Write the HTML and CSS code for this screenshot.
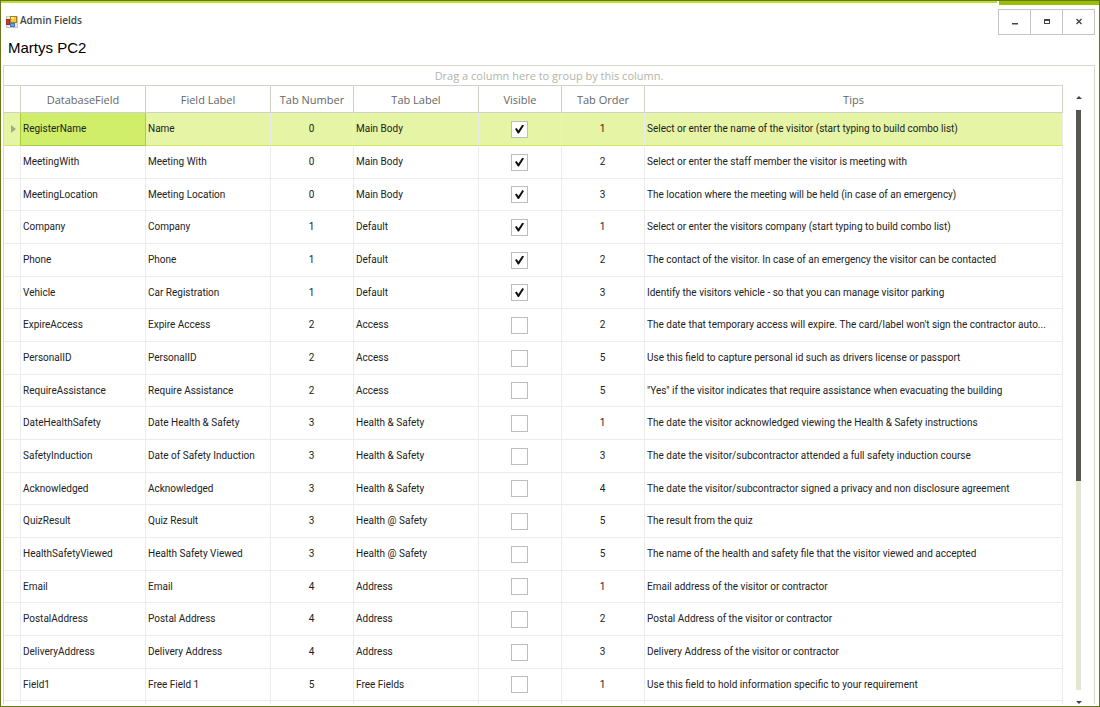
FILE: index.html
```html
<!DOCTYPE html>
<html lang="en">
<head>
    <meta charset="UTF-8">
    <title>Admin Fields</title>
    <link rel="stylesheet" href="styles.css">
</head>
<body>
    <div class="window">
        <div class="title-bar">
            <div class="title">
                <svg class="app-icon" width="12" height="12" viewBox="0 0 12 12">
                    <rect x="0.5" y="0.5" width="11" height="11" fill="#eceae6" stroke="#c9c6c2"/>
                    <rect x="4.5" y="0.5" width="6" height="6" fill="#f5c73c" stroke="#a8801c"/>
                    <rect x="5" y="1" width="3" height="2" fill="#fbe9a4"/>
                    <rect x="0.5" y="3.5" width="3" height="5" fill="#c8402e" stroke="#963024"/>
                    <rect x="4.5" y="7.5" width="4" height="3" fill="#6ba5f2" stroke="#3f74cf"/>
                </svg>
                <span>Admin Fields</span>
            </div>
            <div class="window-buttons">
                <button type="button" aria-label="Minimize">
                    <svg width="8" height="8" viewBox="0 0 8 8"><path d="M1 5h6v1.500H1z" fill="#444"/></svg>
                </button>
                <button type="button" aria-label="Maximize">
                    <svg width="8" height="8" viewBox="0 0 8 8"><path d="M1 1h6v5H1zM2 3v2h4V3z" fill="#444" fill-rule="evenodd"/></svg>
                </button>
                <button type="button" aria-label="Close">
                    <svg width="8" height="8" viewBox="0 0 8 8"><path d="M1.500 1l5 5M6.500 1l-5 5" stroke="#444" stroke-width="1.400"/></svg>
                </button>
            </div>
        </div>

        <h1>Martys PC2</h1>

        <div class="grid-panel">
            <div class="group-panel">Drag a column here to group by this column.</div>
            <div class="grid-body">
                <div class="grid-view">
                    <table class="fields-table">
                        <colgroup>
                            <col class="col-marker">
                            <col class="col-text">
                            <col class="col-text">
                            <col class="col-number">
                            <col class="col-text">
                            <col class="col-number">
                            <col class="col-number">
                            <col>
                        </colgroup>
                        <thead>
                            <tr>
                                <th></th>
                                <th>DatabaseField</th>
                                <th>Field Label</th>
                                <th>Tab Number</th>
                                <th>Tab Label</th>
                                <th>Visible</th>
                                <th>Tab Order</th>
                                <th>Tips</th>
                            </tr>
                        </thead>
                        <tbody>
                            <tr class="selected">
                                <td class="marker"><svg width="5" height="8" viewBox="0 0 5 8"><path d="M0 0l5 4-5 4z" fill="#a3ab83"/></svg></td>
                                <td class="current">RegisterName</td>
                                <td>Name</td>
                                <td class="center">0</td>
                                <td>Main Body</td>
                                <td class="center"><input type="checkbox" aria-label="Name visible" checked></td>
                                <td class="center">1</td>
                                <td>Select or enter the name of the visitor (start typing to build combo list)</td>
                            </tr>
                            <tr>
                                <td></td>
                                <td>MeetingWith</td>
                                <td>Meeting With</td>
                                <td class="center">0</td>
                                <td>Main Body</td>
                                <td class="center"><input type="checkbox" aria-label="Meeting With visible" checked></td>
                                <td class="center">2</td>
                                <td>Select or enter the staff member the visitor is meeting with</td>
                            </tr>
                            <tr>
                                <td></td>
                                <td>MeetingLocation</td>
                                <td>Meeting Location</td>
                                <td class="center">0</td>
                                <td>Main Body</td>
                                <td class="center"><input type="checkbox" aria-label="Meeting Location visible" checked></td>
                                <td class="center">3</td>
                                <td>The location where the meeting will be held (in case of an emergency)</td>
                            </tr>
                            <tr>
                                <td></td>
                                <td>Company</td>
                                <td>Company</td>
                                <td class="center">1</td>
                                <td>Default</td>
                                <td class="center"><input type="checkbox" aria-label="Company visible" checked></td>
                                <td class="center">1</td>
                                <td>Select or enter the visitors company (start typing to build combo list)</td>
                            </tr>
                            <tr>
                                <td></td>
                                <td>Phone</td>
                                <td>Phone</td>
                                <td class="center">1</td>
                                <td>Default</td>
                                <td class="center"><input type="checkbox" aria-label="Phone visible" checked></td>
                                <td class="center">2</td>
                                <td>The contact of the visitor. In case of an emergency the visitor can be contacted</td>
                            </tr>
                            <tr>
                                <td></td>
                                <td>Vehicle</td>
                                <td>Car Registration</td>
                                <td class="center">1</td>
                                <td>Default</td>
                                <td class="center"><input type="checkbox" aria-label="Car Registration visible" checked></td>
                                <td class="center">3</td>
                                <td>Identify the visitors vehicle - so that you can manage visitor parking</td>
                            </tr>
                            <tr>
                                <td></td>
                                <td>ExpireAccess</td>
                                <td>Expire Access</td>
                                <td class="center">2</td>
                                <td>Access</td>
                                <td class="center"><input type="checkbox" aria-label="Expire Access visible"></td>
                                <td class="center">2</td>
                                <td>The date that temporary access will expire. The card/label won't sign the contractor auto...</td>
                            </tr>
                            <tr>
                                <td></td>
                                <td>PersonalID</td>
                                <td>PersonalID</td>
                                <td class="center">2</td>
                                <td>Access</td>
                                <td class="center"><input type="checkbox" aria-label="PersonalID visible"></td>
                                <td class="center">5</td>
                                <td>Use this field to capture personal id such as drivers license or passport</td>
                            </tr>
                            <tr>
                                <td></td>
                                <td>RequireAssistance</td>
                                <td>Require Assistance</td>
                                <td class="center">2</td>
                                <td>Access</td>
                                <td class="center"><input type="checkbox" aria-label="Require Assistance visible"></td>
                                <td class="center">5</td>
                                <td>"Yes" if the visitor indicates that require assistance when evacuating the building</td>
                            </tr>
                            <tr>
                                <td></td>
                                <td>DateHealthSafety</td>
                                <td>Date Health &amp; Safety</td>
                                <td class="center">3</td>
                                <td>Health &amp; Safety</td>
                                <td class="center"><input type="checkbox" aria-label="Date Health &amp; Safety visible"></td>
                                <td class="center">1</td>
                                <td>The date the visitor acknowledged viewing the Health &amp; Safety instructions</td>
                            </tr>
                            <tr>
                                <td></td>
                                <td>SafetyInduction</td>
                                <td>Date of Safety Induction</td>
                                <td class="center">3</td>
                                <td>Health &amp; Safety</td>
                                <td class="center"><input type="checkbox" aria-label="Date of Safety Induction visible"></td>
                                <td class="center">3</td>
                                <td>The date the visitor/subcontractor attended a full safety induction course</td>
                            </tr>
                            <tr>
                                <td></td>
                                <td>Acknowledged</td>
                                <td>Acknowledged</td>
                                <td class="center">3</td>
                                <td>Health &amp; Safety</td>
                                <td class="center"><input type="checkbox" aria-label="Acknowledged visible"></td>
                                <td class="center">4</td>
                                <td>The date the visitor/subcontractor signed a privacy and non disclosure agreement</td>
                            </tr>
                            <tr>
                                <td></td>
                                <td>QuizResult</td>
                                <td>Quiz Result</td>
                                <td class="center">3</td>
                                <td>Health @ Safety</td>
                                <td class="center"><input type="checkbox" aria-label="Quiz Result visible"></td>
                                <td class="center">5</td>
                                <td>The result from the quiz</td>
                            </tr>
                            <tr>
                                <td></td>
                                <td>HealthSafetyViewed</td>
                                <td>Health Safety Viewed</td>
                                <td class="center">3</td>
                                <td>Health @ Safety</td>
                                <td class="center"><input type="checkbox" aria-label="Health Safety Viewed visible"></td>
                                <td class="center">5</td>
                                <td>The name of the health and safety file that the visitor viewed and accepted</td>
                            </tr>
                            <tr>
                                <td></td>
                                <td>Email</td>
                                <td>Email</td>
                                <td class="center">4</td>
                                <td>Address</td>
                                <td class="center"><input type="checkbox" aria-label="Email visible"></td>
                                <td class="center">1</td>
                                <td>Email address of the visitor or contractor</td>
                            </tr>
                            <tr>
                                <td></td>
                                <td>PostalAddress</td>
                                <td>Postal Address</td>
                                <td class="center">4</td>
                                <td>Address</td>
                                <td class="center"><input type="checkbox" aria-label="Postal Address visible"></td>
                                <td class="center">2</td>
                                <td>Postal Address of the visitor or contractor</td>
                            </tr>
                            <tr>
                                <td></td>
                                <td>DeliveryAddress</td>
                                <td>Delivery Address</td>
                                <td class="center">4</td>
                                <td>Address</td>
                                <td class="center"><input type="checkbox" aria-label="Delivery Address visible"></td>
                                <td class="center">3</td>
                                <td>Delivery Address of the visitor or contractor</td>
                            </tr>
                            <tr>
                                <td></td>
                                <td>Field1</td>
                                <td>Free Field 1</td>
                                <td class="center">5</td>
                                <td>Free Fields</td>
                                <td class="center"><input type="checkbox" aria-label="Free Field 1 visible"></td>
                                <td class="center">1</td>
                                <td>Use this field to hold information specific to your requirement</td>
                            </tr>
                            <tr>
                                <td></td>
                                <td></td>
                                <td></td>
                                <td></td>
                                <td></td>
                                <td></td>
                                <td></td>
                                <td></td>
                            </tr>
                        </tbody>
                    </table>
                </div>
                <div class="scrollbar">
                    <button type="button" aria-label="Scroll up">
                        <svg width="6" height="3" viewBox="0 0 6 3"><path d="M0 3l3-3 3 3z" fill="#444"/></svg>
                    </button>
                    <div class="track"><div class="thumb"></div></div>
                    <button type="button" aria-label="Scroll down">
                        <svg width="6" height="3" viewBox="0 0 6 3"><path d="M0 0h6L3 3z" fill="#444"/></svg>
                    </button>
                </div>
            </div>
        </div>
    </div>
</body>
</html>
```

FILE: styles.css
```css
* {
    box-sizing: border-box;
}

body {
    margin: 0;
    font-family: "Open Sans", "Noto Sans", sans-serif;
    font-size: 11px;
    color: #222;
    background: #fff;
}

button {
    padding: 0;
    border: none;
    background: none;
    display: flex;
    align-items: center;
    justify-content: center;
}

.window {
    height: 100vh;
    display: flex;
    flex-direction: column;
    overflow: hidden;
    border: 1px solid #66781a;
    padding: 0 4px 2px 2px;
}

/* Title bar */
.title-bar {
    display: flex;
    justify-content: space-between;
    margin: 0 -4px 0 -2px;
    padding-left: 5px;
    height: 36px;
    background: linear-gradient(#b9e02c, #b9e02c) left top / calc(100% - 102px) 2px no-repeat,
                linear-gradient(#97bf00, #97bf00) right top / 100px 4px no-repeat;
}

.title {
    display: flex;
    align-items: center;
    gap: 2px;
    padding-top: 1px;
    font-size: 10px;
    font-weight: 600;
    color: #444;
}

.app-icon {
    margin-top: 4px;
}

.window-buttons {
    display: flex;
    height: 26px;
    margin: 8px 4px 0 0;
    border: 1px solid #c4c4c4;
}

.window-buttons button {
    width: 31px;
}

.window-buttons button + button {
    width: 32px;
    border-left: 1px solid #c4c4c4;
}

h1 {
    margin: 0 0 6px;
    padding-left: 5px;
    font-family: "Liberation Sans", Arial, sans-serif;
    font-size: 15px;
    font-weight: 400;
    line-height: 22px;
    color: #000;
}

/* Grid */
.grid-panel {
    flex: 1;
    min-height: 0;
    display: flex;
    flex-direction: column;
    border: 1px solid #d5d7cc;
    border-bottom: none;
}

.group-panel {
    height: 19px;
    line-height: 20px;
    text-align: center;
    font-size: 11px;
    color: #b3b3a8;
}

.grid-body {
    flex: 1;
    min-height: 0;
    display: flex;
}

.grid-view {
    flex: 1;
    min-width: 0;
    overflow: hidden;
}

.fields-table {
    width: 100%;
    table-layout: fixed;
    border-collapse: separate;
    border-spacing: 0;
}

.col-marker {
    width: 17px;
}

.col-text {
    width: 125px;
}

.col-number {
    width: 83px;
}

.fields-table th {
    height: 28px;
    padding: 0;
    border: 1px solid #d0d2c6;
    border-left: none;
    font-size: 11px;
    font-weight: 400;
    color: #666;
}

.fields-table td {
    height: 33px;
    padding: 0 3px 0 2px;
    border-right: 1px solid #ececec;
    border-bottom: 1px solid #ececec;
    font-family: Roboto, "Open Sans", sans-serif;
    font-size: 10px;
    line-height: 16px;
    white-space: nowrap;
    overflow: hidden;
    text-overflow: ellipsis;
}

.fields-table tr:nth-child(3n) td {
    height: 32px;
}

.fields-table .center {
    text-align: center;
}

.fields-table .marker {
    padding: 0 4px 0 6px;
}

.marker svg {
    display: block;
    margin-left: auto;
}

.fields-table .selected td {
    background: #e6f5a5;
    border-bottom-color: #cfe860;
}

.fields-table .selected .marker {
    border-right-color: #a9cc3a;
}

.fields-table .selected .current {
    background: #d0ee69;
    border-color: #a9cc3a;
}

input[type="checkbox"] {
    appearance: none;
    display: block;
    width: 17px;
    height: 17px;
    margin: 0 auto;
    border: 1px solid #bdbdbd;
    background: #fff;
}

input[type="checkbox"]:checked::before {
    content: "";
    display: block;
    width: 9px;
    height: 9px;
    margin: 3px;
    background: #111;
    clip-path: polygon(0 50%, 18% 38%, 38% 66%, 82% 0, 100% 12%, 44% 100%, 32% 100%);
}

/* Scrollbar */
.scrollbar {
    width: 31px;
    display: flex;
    flex-direction: column;
    align-items: center;
}

.scrollbar button {
    width: 16px;
    height: 25px;
}

.scrollbar button:last-child {
    height: 14px;
    align-items: flex-end;
}

.track {
    flex: 1;
    width: 5px;
    background: #e2e6d2;
}

.thumb {
    height: 64%;
    background: #555752;
}
```
